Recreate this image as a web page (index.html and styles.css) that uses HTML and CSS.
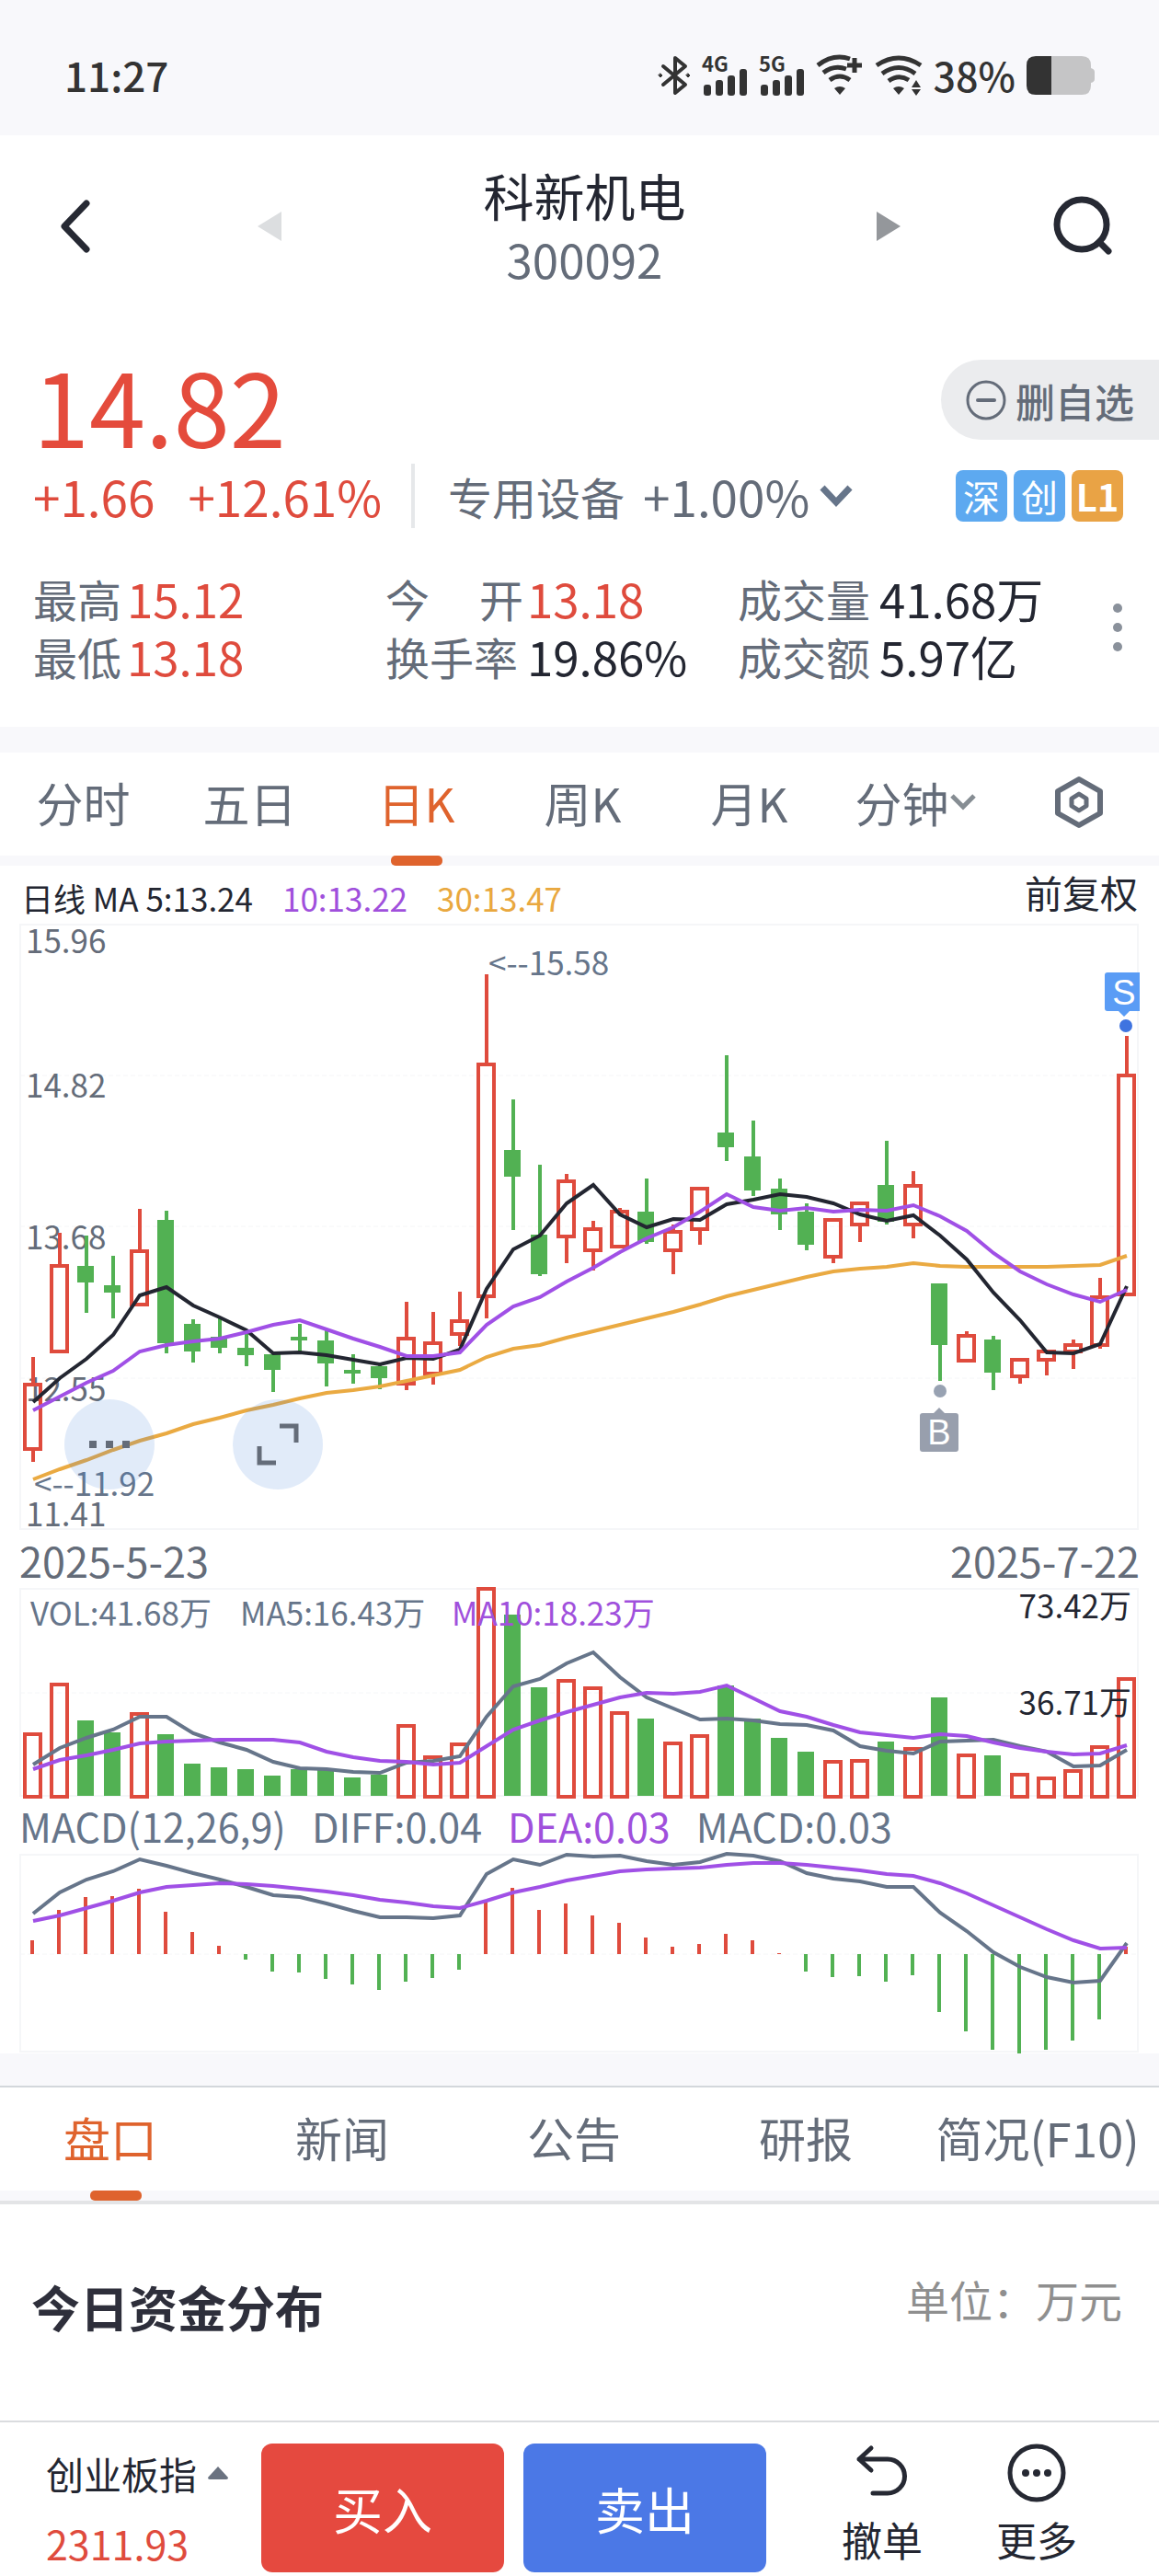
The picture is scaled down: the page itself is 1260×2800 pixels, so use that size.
FILE: index.html
```html
<!DOCTYPE html>
<html lang="zh-CN">
<head>
    <meta charset="UTF-8">
    <meta name="viewport" content="width=device-width, initial-scale=1">
    <title>科新机电 300092</title>
    <link rel="stylesheet" href="styles.css">
</head>
<body>
<div class="status">
    <span class="time">11:27</span>
    <div class="status-icons">
        <svg width="36" height="44" viewBox="0 0 36 44" fill="none" stroke="#333" stroke-width="4" stroke-linejoin="round" stroke-linecap="round">
            <path d="M6 12 30 32 19 41V3L30 12 6 32"/>
            <path d="M3 20l2 2-2 2-2-2zM33 20l2 2-2 2-2-2z" fill="#333" stroke-width="1"/>
        </svg>
        <svg width="50" height="44" viewBox="0 0 50 44" fill="#333">
            <text class="net" x="0" y="18">4G</text>
            <rect x="2" y="32" width="8" height="12" rx="3"/><rect x="15" y="27" width="8" height="17" rx="3"/>
            <rect x="28" y="22" width="8" height="22" rx="3"/><rect x="41" y="15" width="8" height="29" rx="3"/>
        </svg>
        <svg width="50" height="44" viewBox="0 0 50 44" fill="#333">
            <text class="net" x="0" y="18">5G</text>
            <rect x="2" y="32" width="8" height="12" rx="3"/><rect x="15" y="27" width="8" height="17" rx="3"/>
            <rect x="28" y="22" width="8" height="22" rx="3"/><rect x="41" y="15" width="8" height="29" rx="3"/>
        </svg>
        <svg width="52" height="44" viewBox="0 0 52 44" fill="none" stroke="#333" stroke-width="5">
            <path d="M2 11Q19-2 37 4M8 19Q20 10 33 15M15 27Q26 19 37 27"/>
            <path d="M20 36q6-4 12 0l-6 7z" fill="#333" stroke="none"/>
            <path d="M42 3v16M34 11h16"/>
        </svg>
        <svg width="52" height="44" viewBox="0 0 52 44" fill="none" stroke="#333" stroke-width="5">
            <path d="M2 11Q26-5 50 11M8 20Q26 7 44 20M15 28Q26 20 37 27"/>
            <path d="M20 36q6-4 12 0l-6 7zM40 35l5-8 5 8zM40 37h10l-5 7z" fill="#333" stroke="none"/>
        </svg>
        <span class="power">38%</span>
        <svg width="74" height="44" viewBox="0 0 74 44">
            <path d="M10 1h50q10 0 10 10v3q4 1 4 4v8q0 3-4 4v3q0 10-10 10H10z" fill="#c5c5c6"/>
            <path d="M27 1H10Q0 1 0 11v22q0 10 10 10h17z" fill="#333"/>
        </svg>
    </div>
</div>

<header class="header">
    <button aria-label="返回">
        <svg width="36" height="60" viewBox="0 0 36 60"><path d="M30 5 6 30 30 55" fill="none" stroke="#262933" stroke-width="7" stroke-linecap="round" stroke-linejoin="round"/></svg>
    </button>
    <div class="switch">
        <button class="prev" aria-label="上一只">
            <svg width="26" height="32" viewBox="0 0 26 32"><path d="M26 0v32L0 16z" fill="#dcdee0"/></svg>
        </button>
        <div>
            <h1>科新机电</h1>
            <p>300092</p>
        </div>
        <button aria-label="下一只">
            <svg width="26" height="32" viewBox="0 0 26 32"><path d="M0 0v32l26-16z" fill="#94979b"/></svg>
        </button>
    </div>
    <button aria-label="搜索">
        <svg width="68" height="68" viewBox="0 0 68 68" fill="none" stroke="#262933" stroke-width="7" stroke-linecap="round"><circle cx="32" cy="32" r="27"/><path d="M51 51l10 10"/></svg>
    </button>
</header>

<section class="quote">
    <div class="price-row">
        <strong class="price">14.82</strong>
        <button class="del">
            <svg width="44" height="44" viewBox="0 0 44 44" fill="none" stroke="#646c79" stroke-width="3"><circle cx="22" cy="22" r="20"/><path d="M13 22h18" stroke-width="4" stroke-linecap="round"/></svg>
            删自选
        </button>
    </div>
    <div class="change-row">
        <span class="red">+1.66</span>
        <span class="red percent">+12.61%</span>
        <button class="industry">
            <span>专用设备</span>
            <span class="rate">+1.00%</span>
            <svg width="38" height="26" viewBox="0 0 38 26"><path d="M4 4l15 16L34 4" fill="none" stroke="#66758a" stroke-width="7"/></svg>
        </button>
        <div class="tags"><i>深</i><i>创</i><i class="level">L1</i></div>
    </div>
    <div class="stats">
        <dl>
            <div><dt>最高</dt><dd class="red">15.12</dd></div>
            <div><dt>最低</dt><dd class="red">13.18</dd></div>
        </dl>
        <dl class="wide">
            <div><dt class="spread"><span>今</span><span>开</span></dt><dd class="red">13.18</dd></div>
            <div><dt>换手率</dt><dd>19.86%</dd></div>
        </dl>
        <dl class="wide">
            <div><dt>成交量</dt><dd>41.68万</dd></div>
            <div><dt>成交额</dt><dd>5.97亿</dd></div>
        </dl>
        <button aria-label="更多指标">
            <svg width="12" height="54" viewBox="0 0 12 54" fill="#8a919b"><circle cx="6" cy="6" r="5"/><circle cx="6" cy="27" r="5"/><circle cx="6" cy="48" r="5"/></svg>
        </button>
    </div>
</section>

<nav class="tabs period">
    <a href="#">分时</a>
    <a href="#">五日</a>
    <a href="#" class="on">日K</a>
    <a href="#">周K</a>
    <a href="#">月K</a>
    <a href="#">分钟<svg width="30" height="20" viewBox="0 0 30 20"><path d="M3 3l12 12L27 3" fill="none" stroke="#868d93" stroke-width="5"/></svg></a>
    <a href="#" aria-label="设置"><svg width="54" height="58" viewBox="0 0 54 58" fill="none" stroke="#646c79" stroke-width="6" stroke-linejoin="round"><path d="M27 4 50 17v24L27 54 4 41V17z"/><path d="M27 20l8 5v8l-8 5-8-5v-8z" stroke-width="5"/></svg></a>
</nav>

<section class="charts">
    <div class="ma-row">
        <span>日线 MA 5:13.24</span>
        <span class="purple">10:13.22</span>
        <span class="yellow">30:13.47</span>
        <button class="adjust">前复权</button>
    </div>
    <div class="kline">
        <svg id="kline" viewBox="0 0 1260 659"></svg>
        <div class="tools">
            <button aria-label="更多工具"><svg width="44" height="8" viewBox="0 0 44 8" fill="#646c79"><path d="M0 0h8v8H0zM18 0h8v8h-8zM36 0h8v8h-8z"/></svg></button>
            <button aria-label="全屏"><svg width="46" height="46" viewBox="0 0 46 46" fill="none" stroke="#646c79" stroke-width="5"><path d="M25 3h18v18M3 25v18h18"/></svg></button>
        </div>
    </div>
    <div class="dates"><span>2025-5-23</span><span>2025-7-22</span></div>
    <svg id="vol" viewBox="0 0 1260 226"></svg>
    <div class="macd-row">
        <span>MACD(12,26,9)</span><span>DIFF:0.04</span><span class="purple">DEA:0.03</span><span>MACD:0.03</span>
    </div>
    <svg id="macd" viewBox="0 0 1260 217"></svg>
</section>

<nav class="tabs info">
    <a href="#" class="on">盘口</a>
    <a href="#">新闻</a>
    <a href="#">公告</a>
    <a href="#">研报</a>
    <a href="#">简况(F10)</a>
</nav>

<section class="fund">
    <h2>今日资金分布</h2>
    <span>单位：万元</span>
</section>

<footer class="bar">
    <button class="index">
        <span>创业板指<svg width="22" height="14" viewBox="0 0 22 14"><path d="M11 0l11 12q0 2-2 2H2q-2 0-2-2z" fill="#6a7280"/></svg></span>
        <span class="red">2311.93</span>
    </button>
    <button class="trade buy">买入</button>
    <button class="trade sell">卖出</button>
    <button class="action">
        <svg width="64" height="64" viewBox="0 0 64 64" fill="none" stroke="#262933" stroke-width="5" stroke-linecap="round" stroke-linejoin="round"><path d="M20 5 7 17l13 12M7 17h31a18 18 0 0 1 0 37H22"/></svg>
        撤单
    </button>
    <button class="action">
        <svg width="64" height="64" viewBox="0 0 64 64" fill="#262933"><circle cx="32" cy="32" r="29" fill="none" stroke="#262933" stroke-width="5"/><circle cx="20" cy="32" r="4"/><circle cx="32" cy="32" r="4"/><circle cx="44" cy="32" r="4"/></svg>
        更多
    </button>
</footer>
<script src="chart.js"></script>
</body>
</html>
```
FILE: styles.css
```css
* {
    margin: 0;
    padding: 0;
    box-sizing: border-box;
}

body {
    min-height: 100vh;
    display: flex;
    flex-direction: column;
    background: #fff;
    color: #232631;
    font-family: "Noto Sans CJK SC", "Noto Sans", sans-serif;
    font-size: 51px;
}

button {
    border: none;
    background: none;
    color: inherit;
    font: inherit;
    cursor: pointer;
}

a {
    color: inherit;
    text-decoration: none;
}

svg {
    display: block;
    flex: none;
    overflow: visible;
}

h1, i {
    font-weight: normal;
    font-style: normal;
}

.red {
    color: #df4b3d;
}

.purple {
    color: #a050dc;
}

.yellow {
    color: #e9a83f;
}

/* 状态栏 */
.status {
    display: flex;
    justify-content: space-between;
    align-items: center;
    padding: 50px 70px 34px;
    background: #f8f8fb;
    color: #333;
    line-height: 63px;
}

.time {
    font-size: 44px;
    font-weight: 500;
}

.status-icons {
    display: flex;
    align-items: center;
    gap: 12px;
}

.power {
    font-size: 43px;
    font-weight: 500;
}

.net {
    font-size: 22px;
    font-weight: bold;
}

/* 标题栏 */
.header {
    display: flex;
    align-items: center;
    padding: 29px 48px 29px 64px;
    line-height: 70px;
    text-align: center;
}

.header h1 {
    font-size: 55px;
}

.header p {
    font-size: 51px;
    color: #646c79;
}

.switch {
    flex: 1;
    display: flex;
    align-items: center;
    justify-content: space-between;
    padding: 0 165px 0 180px;
}

.prev {
    padding-right: 12px;
}

/* 报价 */
.quote {
    padding: 39px 36px 45px;
    border-bottom: 28px solid #f8f8fb;
}

.price-row {
    display: flex;
    justify-content: space-between;
    align-items: flex-start;
    margin-bottom: 10px;
}

.price {
    color: #e44b3c;
    font-size: 110px;
    font-weight: normal;
    line-height: 110px;
}

.del {
    display: flex;
    align-items: center;
    gap: 10px;
    height: 87px;
    margin: 7px -36px 0 0;
    padding: 0 27px;
    border-radius: 44px 0 0 44px;
    background: #ebecee;
    color: #646c79;
    font-size: 43px;
    font-weight: 500;
}

.change-row {
    display: flex;
    align-items: center;
    height: 70px;
    font-size: 53px;
    line-height: 64px;
}

.percent {
    margin-left: 36px;
}

.industry {
    display: flex;
    align-items: center;
    height: 70px;
    margin-left: 32px;
    padding-left: 36px;
    border-left: 4px solid #e6e8ea;
    color: #646c79;
}

.industry span {
    font-size: 48px;
}

.industry .rate {
    margin: 0 10px 0 20px;
    font-size: 53px;
}

.tags {
    display: flex;
    gap: 7px;
    margin-left: auto;
    padding-right: 3px;
}

.tags i {
    width: 56px;
    border-radius: 8px;
    background: #5da9f0;
    color: #fff;
    font-size: 40px;
    line-height: 56px;
    text-align: center;
}

.tags .level {
    background: #e9a345;
    font-weight: bold;
}

.stats {
    display: grid;
    grid-template-columns: 382fr 382fr 406fr 12px;
    align-items: center;
    margin-top: 45px;
    padding-right: 3px;
    line-height: 63px;
}

.stats dl div {
    display: flex;
    white-space: nowrap;
}

.stats dt {
    flex: none;
    width: 102px;
    color: #646c79;
    font-size: 48px;
}

.stats .wide dt {
    width: 154px;
}

.stats .spread {
    display: flex;
    justify-content: space-between;
    padding-right: 4px;
}

.stats dd {
    font-size: 51px;
}

/* 选项卡 */
.tabs {
    display: grid;
    border-bottom: 11px solid #f8f8fb;
    color: #646c79;
}

.tabs a {
    position: relative;
    display: flex;
    align-items: center;
    justify-content: center;
    height: 112px;
    line-height: 108px;
    padding-bottom: 4px;
    white-space: nowrap;
}

.tabs .on {
    color: #df632d;
}

.tabs .on::after {
    content: "";
    position: absolute;
    bottom: -11px;
    left: calc(50% - 28px);
    width: 56px;
    height: 11px;
    border-radius: 5px;
    background: #df632d;
}

.period {
    grid-template-columns: repeat(6, 181fr) 174fr;
}

.period a svg {
    margin-left: 10px;
}

.period a svg:only-child {
    margin-left: 0;
}

.info {
    grid-template-columns: repeat(5, 1fr);
    border-top: 2px solid #d3d7db;
    box-shadow: 0 4px #e3e4e6;
}

.info a {
    padding-right: 12px;
}

/* 图表 */
.charts {
    border-bottom: 35px solid #f8f8fb;
}

.charts > svg, .kline > svg {
    width: 100%;
    height: auto;
}

.ma-row {
    display: flex;
    align-items: center;
    height: 63px;
    padding: 6px 23px 0;
    font-size: 35px;
}

.ma-row .purple, .ma-row .yellow {
    margin-left: 32px;
}

.adjust {
    margin-left: auto;
    padding-bottom: 12px;
    font-size: 41px;
    line-height: 45px;
}

.kline {
    position: relative;
}

.tools {
    position: absolute;
    left: 70px;
    bottom: 44px;
    display: flex;
    gap: 85px;
}

.tools button {
    display: flex;
    align-items: center;
    justify-content: center;
    width: 98px;
    height: 98px;
    border-radius: 50%;
    background: rgba(70, 130, 220, .16);
}

.dates {
    display: flex;
    justify-content: space-between;
    padding: 2px 21px 0;
    color: #646c79;
    font-size: 45px;
    line-height: 61px;
}

.macd-row {
    display: flex;
    gap: 28px;
    padding: 2px 21px 0;
    color: #66758a;
    font-size: 43px;
    line-height: 61px;
}

.label {
    fill: #646c79;
    font-size: 35px;
}

.label.slate {
    fill: #66758a;
}

.label.purple {
    fill: #a050dc;
}

.label.dark {
    fill: #232631;
}

.mark {
    fill: #fff;
    font-family: "Liberation Sans", sans-serif;
    font-size: 38px;
}

/* 资金分布 */
.fund {
    flex: 1;
    display: flex;
    justify-content: space-between;
    padding: 75px 40px 80px 34px;
    line-height: 80px;
}

.fund h2 {
    color: #2e2f3b;
    font-size: 53px;
}

.fund span {
    margin-top: -8px;
    color: #8f8f8f;
    font-size: 47px;
}

/* 底部交易栏 */
.bar {
    display: flex;
    padding: 23px 49px 4px 50px;
    border-top: 2px solid #dadcdf;
}

.index {
    flex: 234;
    display: flex;
    flex-direction: column;
    justify-content: space-between;
    font-size: 41px;
    line-height: 64px;
    text-align: left;
}

.index span {
    display: flex;
    align-items: center;
    gap: 12px;
}

.index .red {
    font-size: 43px;
}

.trade {
    flex: 264;
    height: 140px;
    margin-right: 21px;
    border-radius: 12px;
    color: #fff;
    font-size: 54px;
}

.buy {
    background: #e5493f;
}

.sell {
    background: #4b78e6;
}

.sell + .action {
    margin-left: 21px;
}

.action {
    flex: 168;
    display: flex;
    flex-direction: column;
    align-items: center;
    justify-content: space-between;
    padding-bottom: 4px;
    font-size: 44px;
    line-height: 64px;
}
```
FILE: chart.js
```javascript
var RED = "#df4b3d", GREEN = "#52b153", BLACK = "#232631", PURPLE = "#a050e6", YELLOW = "#eaaa42", SLATE = "#66758a";

// 每根K线: [涨跌, 最高, 实体上沿, 实体下沿, 最低, 成交量柱顶]
var days = [
    [1, 471, 499, 573, 585, 157], [1, 336, 370, 467, 467, 103], [0, 339, 372, 390, 423, 144],
    [0, 361, 393, 401, 429, 157], [1, 310, 354, 416, 416, 135], [0, 312, 322, 456, 467, 159],
    [0, 430, 435, 465, 477, 191], [0, 428, 449, 461, 467, 195], [0, 444, 461, 469, 481, 197],
    [0, 466, 468, 485, 509, 204], [0, 435, 449, 453, 468, 197], [0, 442, 453, 478, 503, 196],
    [0, 468, 485, 489, 500, 206], [0, 479, 481, 494, 506, 203], [1, 411, 449, 502, 507, 148],
    [1, 422, 454, 491, 501, 182], [1, 400, 430, 448, 459, 168], [1, 55, 151, 407, 429, -1],
    [0, 191, 246, 275, 333, 29], [0, 262, 338, 381, 383, 108], [1, 272, 278, 342, 369, 99],
    [1, 323, 330, 357, 377, 107], [1, 309, 311, 353, 353, 134], [0, 277, 313, 346, 348, 142],
    [1, 327, 333, 357, 381, 167], [1, 286, 286, 334, 349, 159], [0, 143, 227, 243, 258, 106],
    [0, 214, 253, 290, 296, 142], [0, 277, 288, 316, 333, 163], [0, 304, 313, 349, 355, 178],
    [1, 320, 320, 364, 369, 187], [1, 302, 302, 329, 346, 186], [0, 236, 284, 324, 327, 167],
    [1, 269, 283, 329, 342, 173], [0, 391, 391, 458, 497, 119], [1, 443, 446, 477, 477, 180],
    [0, 448, 452, 488, 507, 182], [1, 472, 472, 494, 500, 201], [1, 463, 463, 476, 491, 205],
    [1, 452, 456, 467, 484, 197], [1, 385, 404, 460, 462, 171], [1, 122, 163, 405, 405, 97]
];
var ma5 = [520, 494, 473, 447, 404, 395, 415, 428, 442, 467, 466, 469, 474, 479, 472, 473, 463, 397, 354, 339, 304, 284, 316, 330, 321, 322, 305, 300, 294, 297, 304, 316, 323, 317, 339, 365, 401, 431, 466, 467, 457, 394];
var ma10 = [529, 514, 499, 486, 465, 458, 454, 451, 444, 436, 431, 441, 451, 460, 470, 470, 466, 436, 416, 406, 389, 374, 357, 342, 330, 313, 294, 308, 312, 309, 313, 311, 312, 306, 318, 334, 358, 378, 392, 403, 411, 398];
var ma30 = [604, 593, 583, 572, 562, 554, 544, 537, 529, 523, 516, 510, 507, 503, 497, 491, 485, 471, 462, 458, 450, 443, 436, 429, 422, 414, 405, 398, 391, 384, 378, 375, 373, 369, 372, 373, 373, 373, 373, 372, 371, 361];
var vol5 = [192, 174, 163, 154, 140, 140, 158, 168, 176, 189, 196, 197, 200, 201, 190, 188, 183, 140, 107, 99, 82, 70, 97, 119, 131, 143, 142, 144, 148, 149, 155, 172, 177, 180, 167, 166, 165, 172, 178, 194, 193, 176];
var vol10 = [197, 187, 182, 176, 169, 167, 166, 165, 165, 165, 168, 178, 184, 188, 189, 192, 190, 172, 154, 144, 135, 127, 119, 114, 115, 113, 106, 120, 134, 140, 149, 157, 160, 163, 159, 161, 168, 174, 178, 181, 180, 171];
var hist = [94, 61, 47, 46, 38, 63, 85, 100, 115, 128, 129, 136, 142, 148, 139, 135, 126, 51, 37, 61, 54, 67, 75, 91, 101, 98, 87, 94, 108, 128, 134, 133, 139, 132, 172, 193, 213, 217, 213, 203, 180, 101];
var diff = [65, 42, 28, 19, 6, 13, 21, 28, 36, 45, 47, 54, 62, 69, 69, 70, 67, 22, 6, 12, 1, 3, 2, 8, 12, 9, 0, 2, 8, 21, 27, 30, 36, 36, 64, 84, 107, 123, 134, 140, 138, 97];
var dea = [73, 67, 59, 51, 42, 36, 34, 32, 33, 35, 38, 41, 45, 50, 53, 57, 59, 51, 42, 36, 29, 24, 19, 17, 16, 15, 12, 10, 10, 12, 15, 18, 22, 24, 32, 43, 56, 69, 82, 94, 103, 102];

function cx(i) {
    return 36 + i * 29;
}

function rect(x, y, w, h, color) {
    return '<rect x="' + x + '" y="' + y + '" width="' + w + '" height="' + h + '" fill="' + color + '"/>';
}

// 阳线空心, 阴线实心
function body(i, up, top, bottom) {
    if (!up) {
        return rect(cx(i) - 10, top, 18, bottom - top, GREEN);
    }
    return '<rect x="' + (cx(i) - 9) + '" y="' + (top + 2) + '" width="17" height="' + (bottom - top - 4) +
        '" fill="none" stroke="' + RED + '" stroke-width="4"/>';
}

function line(values, color) {
    var points = values.map(function (v, i) {
        return cx(i) + "," + v;
    });
    return '<polyline points="' + points.join(" ") + '" fill="none" stroke="' + color + '" stroke-width="4"/>';
}

function frame(height, grid) {
    var s = '<rect x="22" y="1" width="1215" height="' + (height - 2) + '" fill="none" stroke="#f5f6f8" stroke-width="2"/>';
    grid.forEach(function (y) {
        s += '<path d="M22 ' + y + 'H1237" stroke="#f5f6f8" stroke-dasharray="5 3"/>';
    });
    return s;
}

function text(x, y, str, cls, anchor) {
    return '<text class="label ' + (cls || "") + '" x="' + x + '" y="' + y + '" text-anchor="' + (anchor || "start") + '">' + str + '</text>';
}

// K线
var k = frame(659, [165, 329, 494]);
k += text(28, 32, "15.96") + text(28, 189, "14.82") + text(28, 354, "13.68") + text(28, 519, "12.55") + text(28, 655, "11.41");
days.forEach(function (d, i) {
    var color = d[0] ? RED : GREEN;
    k += rect(cx(i) - 2, d[1], 4, d[2] - d[1], color) + rect(cx(i) - 2, d[3], 4, d[4] - d[3], color);
    k += body(i, d[0], d[2], d[3]);
});
k += line(ma30, YELLOW) + line(ma5, BLACK) + line(ma10, PURPLE);
k += text(531, 56, "&lt;--15.58", "slate") + text(37, 622, "&lt;--11.92", "slate");
// 买卖点
k += '<path d="M1239 53h-35q-3 0-3 3v36q0 3 3 3h12l6 6 6-6h11z" fill="#5a9cf5"/><circle cx="1224" cy="111" r="7" fill="#3f74e0"/>';
k += '<text class="mark" x="1222" y="88" text-anchor="middle">S</text>';
k += '<path d="M1003 532h12l6-6 6 6h12q3 0 3 3v36q0 3-3 3h-36q-3 0-3-3v-36q0-3 3-3z" fill="#989fad"/><circle cx="1022" cy="508" r="7" fill="#98a2b2"/>';
k += '<text class="mark" x="1021" y="566" text-anchor="middle">B</text>';
document.getElementById("kline").innerHTML = k;

// 成交量
var v = frame(227, [114]);
days.forEach(function (d, i) {
    v += body(i, d[0], d[5], d[0] ? 229 : 226);
});
v += line(vol5, SLATE) + line(vol10, PURPLE);
v += text(33, 41, "VOL:41.68万", "slate") + text(261, 41, "MA5:16.43万", "slate") + text(491, 41, "MA10:18.23万", "purple");
v += text(1230, 33, "73.42万", "dark", "end") + text(1230, 138, "36.71万", "dark", "end");
document.getElementById("vol").innerHTML = v;

// MACD, 109为零轴
var m = frame(216, [109]);
hist.forEach(function (h, i) {
    m += h < 109 ? rect(cx(i) - 3, h, 4, 109 - h, RED) : rect(cx(i) - 3, 109, 4, h - 109, GREEN);
});
m += line(diff, SLATE) + line(dea, PURPLE);
document.getElementById("macd").innerHTML = m;
```
